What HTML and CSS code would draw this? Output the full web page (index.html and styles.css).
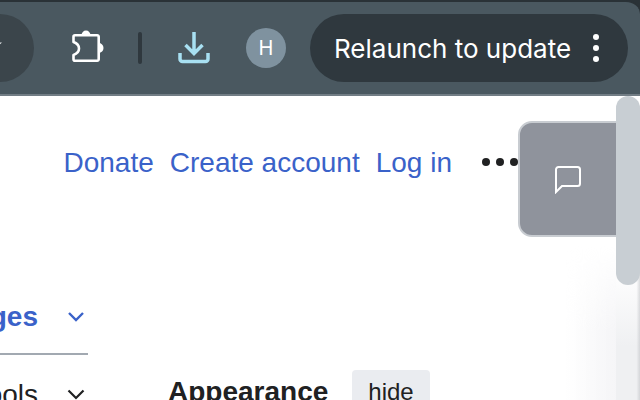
FILE: index.html
```html
<!DOCTYPE html>
<html lang="en">
<head>
<meta charset="utf-8">
<title>Appearance</title>
<link rel="stylesheet" href="styles.css">
</head>
<body>
<header class="toolbar">
  <div class="address-end">
    <svg class="star" width="12" height="12" viewBox="0 0 12 12" aria-hidden="true"><path d="M6 0l1.700 4.200L12 4.600 8.700 7.400 9.700 12 6 9.500 2.300 12l1-4.600L0 4.600l4.300-.4Z" fill="#e6e9eb"/></svg>
  </div>
  <svg class="icon-ext" width="34" height="36" viewBox="0 0 34 36" aria-hidden="true">
    <path d="M5 5.300H27.200a1.500 1.500 0 0 1 1.500 1.500V29.200a1.500 1.500 0 0 1-1.500 1.500H5a1.500 1.500 0 0 1-1.500-1.500V25Q9 23 9 18.500 9 14 3.500 12V6.800A1.500 1.500 0 0 1 5 5.300Z" fill="none" stroke="#fff" stroke-width="2.600" stroke-linejoin="round"/>
    <path d="M11.500 5.300a4.500 4.800 0 0 1 9 0Z M28.700 13a4.800 5 0 0 1 0 10Z" fill="#fff"/>
  </svg>
  <div class="divider"></div>
  <svg class="icon-dl" width="34" height="34" viewBox="0 0 34 34" aria-hidden="true">
    <path d="M17 1v21.500M8.500 14 17 22.500 25.500 14" fill="none" stroke="#a8e0f2" stroke-width="3.500"/>
    <path d="M3 22v6a2.500 2.500 0 0 0 2.500 2.500h23A2.500 2.500 0 0 0 31 28v-6" fill="none" stroke="#a8e0f2" stroke-width="3.500"/>
  </svg>
  <div class="avatar">H</div>
  <div class="relaunch">
    <span class="relaunch-label">Relaunch to update</span>
    <span class="kebab"><i></i><i></i><i></i></span>
  </div>
</header>
<main class="page">
  <nav class="links">
    <a>Donate</a><a>Create account</a><a>Log in</a>
    <span class="more"><i></i><i></i><i></i></span>
  </nav>
  <div class="columns">
    <aside class="side">
      <div class="side-row side-lang">
        <span class="side-text">Languages</span>
        <svg width="20" height="12" viewBox="0 0 20 12" aria-hidden="true"><path d="M3 2l7 7 7-7" fill="none" stroke="#3a62c9" stroke-width="2.400"/></svg>
      </div>
      <div class="side-row side-tools">
        <span class="side-text">Tools</span>
        <svg width="20" height="12" viewBox="0 0 20 12" aria-hidden="true"><path d="M2.500 1.500l7.500 7.500 7.500-7.500" fill="none" stroke="#202122" stroke-width="2.200"/></svg>
      </div>
    </aside>
    <section class="appearance">
      <h2>Appearance</h2>
      <span class="hide">hide</span>
    </section>
  </div>
  <div class="feedback">
    <svg width="30" height="30" viewBox="0 0 30 30" aria-hidden="true"><path d="M3 5.500A2.500 2.500 0 0 1 5.500 3h19A2.500 2.500 0 0 1 27 5.500v14a2.500 2.500 0 0 1-2.500 2.500H9l-6 6Z" fill="none" stroke="#fff" stroke-width="2"/></svg>
  </div>
  <div class="fade"></div>
  <div class="track"></div>
  <div class="scroll-thumb"></div>
</main>
</body>
</html>
```
FILE: styles.css
```css
* { box-sizing: border-box; }
html, body { margin: 0; height: 100%; }
body {
  width: 640px;
  height: 400px;
  overflow: hidden;
  background: #2a3237;
  font-family: "Liberation Sans", Arial, sans-serif;
}
.toolbar {
  height: 96px;
  padding: 12px 12px 12px 0;
  display: flex;
  align-items: center;
  background: #4a5860;
  border-top: 2px solid #2a3237;
  border-bottom: 2px solid #727d85;
  border-top-right-radius: 14px;
  font-family: Inter, "Liberation Sans", sans-serif;
}
.address-end {
  width: 34px;
  height: 68px;
  background: #3b454b;
  border-radius: 0 34px 34px 0;
  flex: none;
  overflow: hidden;
  display: flex;
  align-items: center;
}
.star { margin-left: -10px; margin-bottom: 8px; flex: none; }
.icon-ext { margin-left: 36px; flex: none; }
.divider {
  width: 4px;
  height: 32px;
  margin-left: 34px;
  border-radius: 2px;
  background: #2f383e;
  flex: none;
}
.icon-dl { margin-left: 35px; flex: none; }
.avatar {
  width: 40px;
  height: 40px;
  margin-left: 35px;
  border-radius: 50%;
  background: #7f929f;
  color: #fff;
  font-size: 20px;
  display: flex;
  align-items: center;
  justify-content: center;
  flex: none;
}
.relaunch {
  width: 318px;
  height: 68px;
  margin-left: 24px;
  padding-left: 24px;
  border-radius: 34px;
  background: #2f383e;
  color: #fff;
  display: flex;
  align-items: center;
  flex: none;
}
.relaunch-label { font-size: 26px; white-space: nowrap; }
.kebab { margin-left: 22px; display: flex; flex-direction: column; gap: 5px; }
.kebab i { width: 6px; height: 6px; border-radius: 50%; background: #fff; display: block; }
.page {
  position: relative;
  height: 304px;
  background: #fff;
  color: #202122;
  overflow: hidden;
}
.links {
  height: 86px;
  padding: 48px 0 0 63.5px;
  display: flex;
  align-items: center;
  gap: 16px;
  font-size: 28px;
  line-height: 40px;
  white-space: nowrap;
  color: #3a62c9;
}
.more { display: flex; gap: 6px; margin-left: 14.5px; margin-top: -2px; }
.more i { width: 8px; height: 8px; border-radius: 50%; background: #202122; display: block; }
.columns { display: flex; }
.side { width: 88px; flex: none; font-size: 28px; }
.side-row {
  display: flex;
  justify-content: flex-end;
  align-items: center;
  white-space: nowrap;
}
.side-row svg { margin-left: 28px; margin-right: 2px; flex: none; }
.side-lang {
  height: 173px;
  align-items: flex-end;
  padding-bottom: 20px;
  border-bottom: 2px solid #a2a9b1;
  color: #3a62c9;
  font-weight: 700;
}
.side-lang svg { margin-bottom: 10px; }
.side-tools { height: 80px; }
.appearance {
  margin-left: 80px;
  display: flex;
  align-items: flex-start;
  padding-top: 188px;
}
.appearance h2 { margin: 2px 0 0; font-size: 28px; line-height: 40px; font-weight: 700; white-space: nowrap; }
.hide {
  margin-left: 24px;
  padding: 0 16px;
  height: 46px;
  border-radius: 4px;
  background: #eaecf0;
  font-size: 24px;
  line-height: 44px;
}
.feedback {
  position: absolute;
  left: 518px;
  top: 25px;
  width: 130px;
  height: 116px;
  border: 2px solid #c8ccd1;
  border-radius: 14px;
  background: #8f939c;
  display: flex;
  padding-left: 33px;
  padding-top: 41px;
}
.fade {
  position: absolute;
  left: 566px;
  top: 150px;
  width: 50px;
  height: 154px;
  background: linear-gradient(to right, rgba(244,244,246,0), #f5f5f7);
  -webkit-mask-image: linear-gradient(transparent, #000 55%);
  mask-image: linear-gradient(transparent, #000 55%);
}
.track {
  position: absolute;
  left: 616px;
  top: 170px;
  width: 24px;
  height: 134px;
  background:
    linear-gradient(to right, rgba(190,192,196,0) 85%, rgba(190,192,196,.55) 100%),
    linear-gradient(#fff, #eff0f2 60%);
}
.scroll-thumb {
  position: absolute;
  left: 616px;
  top: 0;
  width: 24px;
  height: 189px;
  border-radius: 12px;
  background: #c8ced3;
}
```
